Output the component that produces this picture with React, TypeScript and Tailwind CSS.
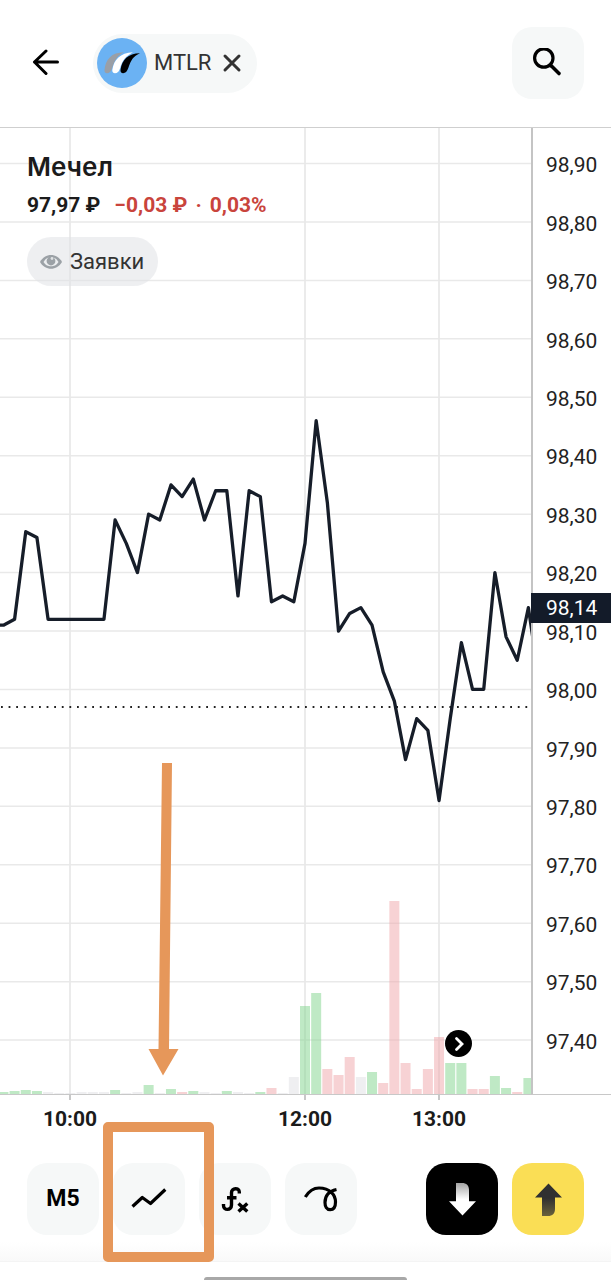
import { ReactNode } from "react";

type Tone = "up" | "down" | "flat";

const MAX_PRICE = 98.9;
const PLOT_WIDTH = 531;
const PLOT_HEIGHT = 966;
const STEP = 11.17;

const priceLabels = [
  "98,90",
  "98,80",
  "98,70",
  "98,60",
  "98,50",
  "98,40",
  "98,30",
  "98,20",
  "98,10",
  "98,00",
  "97,90",
  "97,80",
  "97,70",
  "97,60",
  "97,50",
  "97,40",
];

// x positions of the hour marks on the plot
const hourMarks = [70, 305, 439];

const prices = [
  98.11, 98.12, 98.27, 98.26, 98.12, 98.12, 98.12, 98.12, 98.12, 98.12, 98.29,
  98.25, 98.2, 98.3, 98.29, 98.35, 98.33, 98.36, 98.29, 98.34, 98.34, 98.16,
  98.34, 98.33, 98.15, 98.16, 98.15, 98.25, 98.46, 98.32, 98.1, 98.13, 98.14,
  98.11, 98.03, 97.98, 97.88, 97.95, 97.93, 97.81, 97.95, 98.08, 98.0, 98.0,
  98.2, 98.09, 98.05, 98.14, 98.01,
];

const volumes: [number, Tone][] = [
  [2, "up"],
  [3, "up"],
  [4, "up"],
  [3, "up"],
  [2, "flat"],
  [1, "flat"],
  [1, "flat"],
  [2, "flat"],
  [2, "flat"],
  [2, "flat"],
  [4, "up"],
  [1, "flat"],
  [2, "flat"],
  [9, "up"],
  [1, "flat"],
  [5, "up"],
  [2, "down"],
  [3, "up"],
  [2, "flat"],
  [1, "flat"],
  [3, "up"],
  [2, "flat"],
  [1, "flat"],
  [2, "up"],
  [6, "down"],
  [1, "flat"],
  [17, "flat"],
  [88, "up"],
  [101, "up"],
  [25, "down"],
  [19, "down"],
  [37, "down"],
  [17, "flat"],
  [22, "up"],
  [11, "down"],
  [193, "down"],
  [31, "down"],
  [5, "down"],
  [25, "down"],
  [57, "down"],
  [31, "up"],
  [31, "up"],
  [5, "down"],
  [5, "down"],
  [18, "up"],
  [6, "up"],
  [2, "down"],
  [16, "up"],
];

const toneFill: Record<Tone, string> = {
  up: "fill-[#7fd48b]/50",
  down: "fill-[#f0a5aa]/50",
  flat: "fill-[#dfe0e4]/50",
};

const toX = (index: number) => 305 + (index - 27) * STEP;
const toY = (price: number) => 35.5 + (MAX_PRICE - price) * 584.4;

function ToolButton({
  label,
  className = "bg-[#f6f8f8]",
  children,
}: {
  label: string;
  className?: string;
  children: ReactNode;
}) {
  return (
    <button
      type="button"
      aria-label={label}
      className={`flex size-18 shrink-0 items-center justify-center rounded-[20px] ${className}`}
    >
      {children}
    </button>
  );
}

function TickerLogo() {
  return (
    <svg viewBox="0 0 50 50" className="size-[50px]" aria-hidden="true">
      <circle cx="25" cy="25" r="25" fill="#6bb2f3" />
      <path
        d="M7.5 32C8.5 21 14.5 14.5 27 14.2C20.5 17.5 17.5 22 15 30.5Q13.3 35.2 10 35.2Q7.2 35 7.5 32Z"
        fill="#9a9fa6"
      />
      <path
        d="M15.3 32C17 21.500 23 15 36 14.300C29 18 25.500 22 23 30.500Q21.500 35.200 18 35.200Q15 35 15.300 32Z"
        fill="#fff"
      />
      <path
        d="M23.500 32C25 22 31 15.300 43 15.300C36 18.500 34 22 31.300 30Q29.500 35.200 26.200 35.200Q23.200 35 23.500 32Z"
        fill="#000"
      />
    </svg>
  );
}

function Header() {
  return (
    <header className="flex items-center border-b border-[#cfcfcf] px-[27px] pt-[27px] pb-7">
      <button type="button" aria-label="Назад" className="flex h-12 w-[39px] items-center pl-1">
        <svg
          viewBox="0 0 28 28"
          className="size-7"
          fill="none"
          stroke="#000"
          strokeWidth="3"
          strokeLinecap="round"
          strokeLinejoin="round"
        >
          <path d="M26.5 13H3.5M15 2L3.500 13L15 24.500" />
        </svg>
      </button>

      <div className="ml-[27px] flex h-[59px] items-center rounded-full bg-[#f6f8f8] pr-[15px] pl-1">
        <TickerLogo />
        <span className="ml-[7px] text-[22px] leading-7 text-[#333]">MTLR</span>
        <button type="button" aria-label="Убрать MTLR" className="ml-[11px]">
          <svg
            viewBox="0 0 20 20"
            className="size-5"
            stroke="#333"
            strokeWidth="3"
            strokeLinecap="round"
          >
            <path d="M3 3L17 17M17 3L3 17" />
          </svg>
        </button>
      </div>

      <div className="ml-auto">
        <ToolButton label="Поиск">
          <svg viewBox="0 0 30 30" className="size-[30px]" fill="none" stroke="#000" strokeLinecap="round">
            <circle cx="10.8" cy="10" r="9.2" strokeWidth="3.2" />
            <path d="M18.500 18L26 25.500" strokeWidth="3.6" />
          </svg>
        </ToolButton>
      </div>
    </header>
  );
}

function PriceChart() {
  const points = [`0,${toY(98.11)}`, ...prices.map((p, i) => `${toX(i)},${toY(p)}`)].join(" ");

  return (
    <svg
      viewBox={`0 0 ${PLOT_WIDTH} ${PLOT_HEIGHT}`}
      preserveAspectRatio="none"
      className="absolute inset-0 h-full w-full"
      role="img"
      aria-label="График цены Мечел"
    >
      {priceLabels.map((label, i) => (
        <line
          key={label}
          x1="0"
          x2={PLOT_WIDTH}
          y1={toY(MAX_PRICE - i / 10)}
          y2={toY(MAX_PRICE - i / 10)}
          stroke="#e9e9e9"
          strokeWidth="1.5"
        />
      ))}
      {hourMarks.map((x) => (
        <line key={x} x1={x} x2={x} y1="0" y2={PLOT_HEIGHT} stroke="#e8e8e8" strokeWidth="1.7" />
      ))}

      {volumes.map(([height, tone], i) => (
        <rect
          key={i}
          x={toX(i) - 5}
          y={PLOT_HEIGHT - height}
          width="10"
          height={height}
          className={toneFill[tone]}
        />
      ))}

      <line
        x1="1"
        x2={PLOT_WIDTH}
        y1={toY(97.97)}
        y2={toY(97.97)}
        stroke="#222"
        strokeWidth="1.8"
        strokeDasharray="1.8 5.8"
      />
      <polyline
        points={points}
        fill="none"
        stroke="#161d29"
        strokeWidth="3.3"
        strokeLinejoin="round"
      />

      {/* pointer down to the chart type button */}
      <path d="M162 635H172L169 921H178.5L163 947.5L148.5 921H158.5Z" fill="#e6975a" />
    </svg>
  );
}

function Quote() {
  return (
    <section className="relative px-[27px] pt-[21px]">
      <h1 className="font-[Inter,sans-serif] text-[26px] leading-9 font-semibold text-[#1b1b1b]">Мечел</h1>
      <p className="mt-1.5 flex text-[21px] leading-7 font-bold text-[#1b1b1b]">
        <span>97,97 ₽</span>
        <span className="ml-3.5 flex gap-2 text-[#c9443c]">
          <span>−0,03 ₽</span>
          <span>·</span>
          <span>0,03%</span>
        </span>
      </p>
      <button
        type="button"
        className="mt-[18px] flex h-[49px] items-center gap-2 rounded-full bg-[#e0e2e6]/55 pr-3.5 pl-[13px] text-[22px] text-[#333]"
      >
        <svg viewBox="0 0 22 16" className="h-4 w-[22px]" aria-hidden="true">
          <path d="M0 8C5 -1.200 17 -1.200 22 8C17 17 5 17 0 8Z" fill="#9ba1a6" />
          <path d="M3.500 8C6 4 8 3.500 11 3.500S16 4 18.500 8C16 11.500 14 12.300 11 12.300S6 11.500 3.500 8Z" fill="#eceef0" />
          <circle cx="11" cy="7" r="4.400" fill="#9ba1a6" />
          <circle cx="12" cy="4.500" r="1.400" fill="#dfe2e4" />
        </svg>
        Заявки
      </button>
    </section>
  );
}

function PriceAxis() {
  return (
    <aside className="relative flex w-[78px] shrink-0 flex-col pt-2 pb-[23px] text-[21px] text-[#222]">
      {priceLabels.map((label) => (
        <div key={label} className="flex flex-1 items-center pl-[13px] leading-6">
          {label}
        </div>
      ))}
      <div
        className="absolute right-0 -left-0.5 -translate-y-1/2 bg-[#131b29] pl-[15px] leading-[30px] text-white"
        style={{ top: `${(toY(98.14) / PLOT_HEIGHT) * 100}%` }}
      >
        98,14
      </div>
    </aside>
  );
}

function TimeAxis() {
  return (
    <div className="grid grid-cols-[140fr_98fr_134fr_134fr_105fr] border-t border-[#c8c8c8] text-center text-[21px] leading-6 font-bold text-[#1b1b1b]">
      {["10:00", "", "12:00", "13:00"].map((time, i) => (
        <div key={i} className="flex flex-col items-center">
          {time && <span className="mb-[7px] h-[5px] w-0.5 bg-[#c8c8c8]" />}
          {time}
        </div>
      ))}
    </div>
  );
}

function Toolbar() {
  return (
    <nav className="flex items-center gap-3.5 bg-linear-to-b from-white from-85% to-[#f9f9f9] px-[27px] pt-8 pb-[26px]">
      <ToolButton label="Интервал M5">
        <span className="text-[23px] font-bold text-black">M5</span>
      </ToolButton>

      <div className="relative">
        <ToolButton label="Тип графика">
          <svg viewBox="0 0 72 72" className="size-18" fill="none" stroke="#000" strokeWidth="3.2">
            <path d="M19.500 43.500L29.300 34.500L37.500 40.500L52.300 26.500" strokeLinejoin="round" />
          </svg>
        </ToolButton>
        <div className="pointer-events-none absolute -top-[41px] -right-[29px] -bottom-[27px] -left-2.5 z-10 rounded-[5px] border-10 border-[#e6975a]" />
      </div>

      <ToolButton label="Индикаторы">
        <svg viewBox="0 0 72 72" className="size-18" fill="none" stroke="#000" strokeWidth="3.4">
          <path d="M40.300 30.500V29C40.300 24.500 32.500 24.500 32.500 29.500V42C32.500 47.800 24.500 47.800 24.500 42.500V41" />
          <path d="M28 34.700H37.500M39.500 40.500L48.300 48.500M48.300 40.500L39.500 48.500" />
        </svg>
      </ToolButton>

      <ToolButton label="Рисование">
        <svg viewBox="0 0 72 72" className="size-18" fill="none" stroke="#000" strokeWidth="3.2">
          <path d="M20.300 34C24 28 29 25 34 25C45 25 50.500 32 50.500 39C50.500 44 48.500 46.700 45.200 46.700C41.700 46.700 40 43.500 40 39.500C40 32.500 44.500 28 51.500 26.500" />
        </svg>
      </ToolButton>

      <div className="ml-auto flex gap-3.5">
        <ToolButton label="Продать" className="bg-black">
          <svg viewBox="0 0 72 72" className="size-18">
            <defs>
              <linearGradient id="sell" x1="0" y1="0" x2="0" y2="1">
                <stop offset="0" stopColor="#a3a3a3" />
                <stop offset="0.5" stopColor="#fff" />
              </linearGradient>
            </defs>
            <path d="M30 20H36C40.500 20 43 22.500 43 27V38.300H50L36.500 52.500L23 38.300H30Z" fill="url(#sell)" />
          </svg>
        </ToolButton>
        <ToolButton label="Купить" className="bg-[#fade55]">
          <svg viewBox="0 0 72 72" className="size-18">
            <defs>
              <linearGradient id="buy" x1="0" y1="0" x2="0" y2="1">
                <stop offset="0.45" stopColor="#303030" />
                <stop offset="1" stopColor="#6a623b" />
              </linearGradient>
            </defs>
            <path d="M36.500 20.500L50 34.500H43V46C43 50.500 40.500 53 36 53H30V34.500H23Z" fill="url(#buy)" />
          </svg>
        </ToolButton>
      </div>
    </nav>
  );
}

export default function App() {
  return (
    <div className="flex min-h-screen flex-col overflow-hidden bg-white font-[Roboto,'Noto_Sans',sans-serif]">
      <Header />

      <main className="flex min-h-[640px] flex-1">
        <div className="relative flex-1 border-r-2 border-[#c4c4c4]">
          <PriceChart />
          <Quote />
          <button
            type="button"
            aria-label="К последней свече"
            className="absolute right-[59px] bottom-[37px] flex size-[27px] items-center justify-center rounded-full bg-black"
          >
            <svg
              viewBox="0 0 16 16"
              className="size-4"
              fill="none"
              stroke="#fff"
              strokeWidth="2.8"
              strokeLinecap="round"
            >
              <path d="M5.500 2.500L11 8L5.500 13.500" />
            </svg>
          </button>
        </div>
        <PriceAxis />
      </main>

      <TimeAxis />
      <Toolbar />

      <div className="flex justify-center border-t border-[#f4f4f4] pt-[15px]">
        <div className="h-[3px] w-1/3 rounded-t-full bg-[#a8a8a8]" />
      </div>
    </div>
  );
}
